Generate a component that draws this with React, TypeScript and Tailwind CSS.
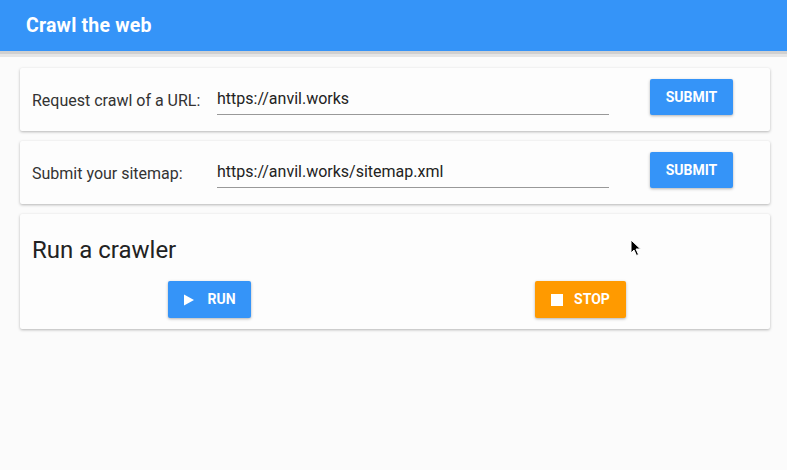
import React from "react";

function Row({ label, value }: { label: string; value: string }) {
  return (
    <div className="h-[63px] rounded-[2px] bg-[#fdfdfd] shadow-[0_1px_3px_rgba(0,0,0,0.28)] flex items-start pl-3">
      <div className="w-[185px] pt-[21px] text-[16px] text-[#333]">{label}</div>
      <div className="w-[392px] pt-[20px]">
        <div className="h-[27px] border-b border-[#999] text-[16px] text-[#222] leading-[22px]">{value}</div>
      </div>
      <button className="ml-[41px] mt-[11px] w-[83px] h-[36px] rounded-[2px] bg-[#3594f8] text-white text-[14px] font-bold shadow-[0_1px_3px_rgba(0,0,0,0.3)]">
        SUBMIT
      </button>
    </div>
  );
}

export default function App() {
  return (
    <div className="relative min-h-[470px] bg-[#fbfbfb] font-['Roboto',sans-serif]">
      <div className="h-[51px] bg-[#3594f8] flex items-center px-[26px]">
        <h1 className="text-white text-[19.5px] font-bold tracking-[0.2px]">Crawl the web</h1>
      </div>
      <div className="h-[3px] bg-[#d0d0d0]" />
      <div className="h-[3px] bg-[#e5e5e5]" />
      <div className="pl-5 pr-[17px] pt-[11px] flex flex-col gap-[10px]">
        <Row label="Request crawl of a URL:" value="https://anvil.works" />
        <Row label="Submit your sitemap:" value="https://anvil.works/sitemap.xml" />
        <div className="h-[115px] rounded-[2px] bg-[#fdfdfd] shadow-[0_1px_3px_rgba(0,0,0,0.28)] px-1 pt-[21px]">
          <h2 className="pl-2 text-[24px] text-[#222] leading-[30px]">Run a crawler</h2>
          <div className="grid grid-cols-2 mt-[16px]">
            <div className="flex justify-center">
              <button className="w-[83px] h-[37px] rounded-[2px] bg-[#3594f8] text-white text-[14px] font-bold flex items-center justify-center gap-[12px] shadow-[0_1px_3px_rgba(0,0,0,0.3)]">
                <svg width="12" height="12" viewBox="0 0 12 12"><path d="M1 0.5 L11 6 L1 11.5 Z" fill="white" /></svg>
                RUN
              </button>
            </div>
            <div className="flex justify-center">
              <button className="w-[91px] h-[37px] rounded-[2px] bg-[#ff9a00] text-white text-[14px] font-bold flex items-center justify-center gap-[11px] shadow-[0_1px_3px_rgba(0,0,0,0.3)]">
                <span className="w-[12px] h-[12px] bg-white" />
                STOP
              </button>
            </div>
          </div>
        </div>
      </div>
      <svg className="absolute left-[630px] top-[239px]" width="12" height="18" viewBox="0 0 12 18">
        <path d="M1 1 L1 14 L4 11 L6.5 16.5 L8.5 15.5 L6 10 L10.5 10 Z" fill="black" stroke="white" strokeWidth="1" />
      </svg>
    </div>
  );
}
